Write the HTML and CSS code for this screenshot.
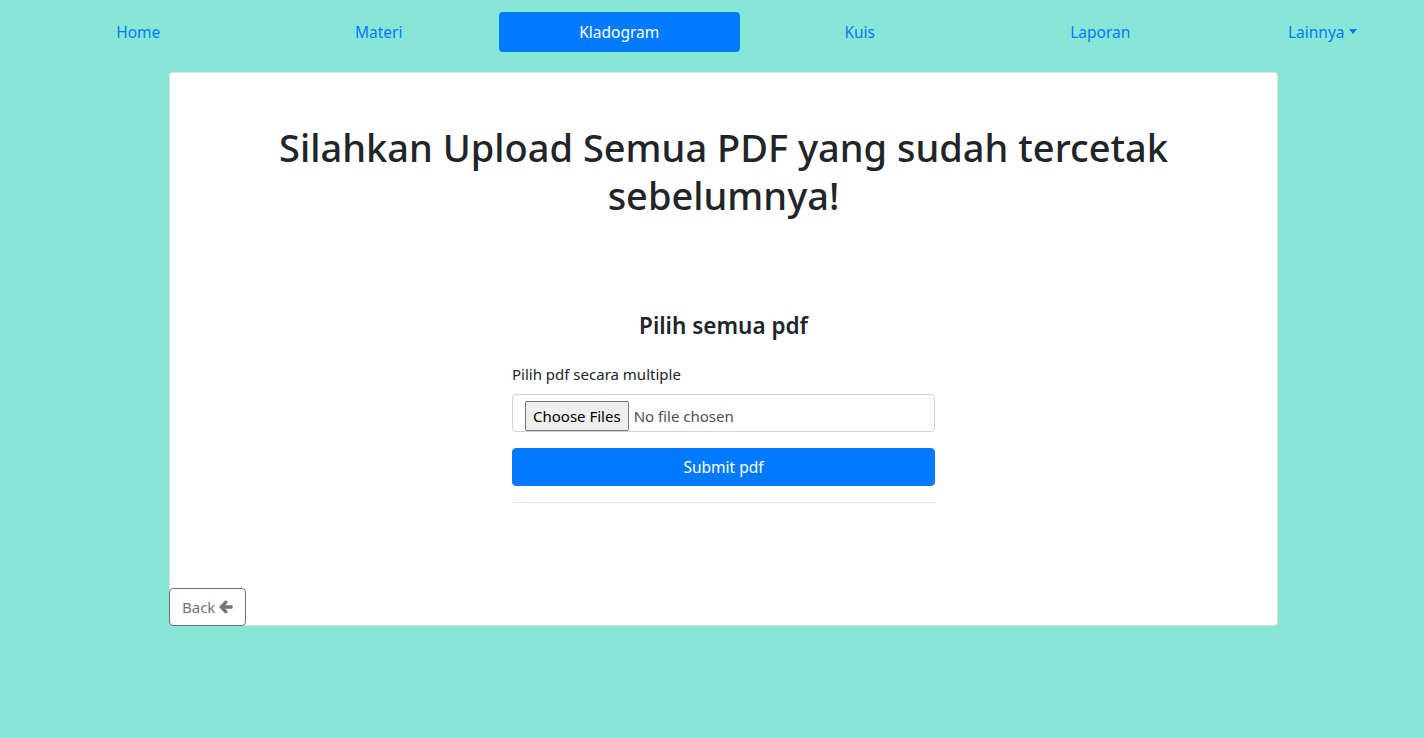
FILE: index.html
```html
<!DOCTYPE html>
<html lang="id">
<head>
<meta charset="utf-8">
<title>Upload PDF</title>
<link rel="stylesheet" href="styles.css">
</head>
<body>
<nav class="topnav">
  <a class="nav-link" href="#">Home</a>
  <a class="nav-link" href="#">Materi</a>
  <a class="nav-link active" href="#">Kladogram</a>
  <a class="nav-link" href="#">Kuis</a>
  <a class="nav-link" href="#">Laporan</a>
  <a class="nav-link" href="#">Lainnya<span class="caret"></span></a>
</nav>
<main class="card">
  <div class="card-body">
    <h1 class="title">Silahkan Upload Semua PDF yang sudah tercetak<br>sebelumnya!</h1>
    <div class="form-col">
      <h4 class="subtitle">Pilih semua pdf</h4>
      <div class="form-group">
        <label class="label">Pilih pdf secara multiple</label>
        <div class="file-input">
          <span class="file-btn">Choose Files</span>
          <span class="file-name">No file chosen</span>
        </div>
      </div>
      <button class="btn-submit" type="button">Submit pdf</button>
      <hr class="divider">
    </div>
  </div>
  <div class="card-footer">
    <a class="btn-back" href="#">Back
      <svg class="arrow" viewBox="0 0 448 512" width="14" height="14"><path fill="currentColor" stroke="currentColor" stroke-width="40" stroke-linejoin="round" d="M257.5 445.1l-22.2 22.2c-9.4 9.4-24.6 9.4-33.9 0L7 273c-9.4-9.4-9.4-24.6 0-33.9L201.4 44.7c9.4-9.4 24.6-9.4 33.9 0l22.2 22.2c9.5 9.5 9.3 25-.4 34.3L136.6 216H424c13.3 0 24 10.7 24 24v32c0 13.3-10.7 24-24 24H136.6l120.5 114.8c9.8 9.3 10 24.8.4 34.3z"/></svg>
    </a>
  </div>
</main>
</body>
</html>
```
FILE: styles.css
```css
* { box-sizing: border-box; }
html, body { margin: 0; padding: 0; }
body {
  background: #87e6d5;
  font-family: "Noto Sans", "Open Sans", sans-serif;
  font-size: 16px;
  color: #212529;
  height: 738px;
}
.topnav {
  display: grid;
  grid-template-columns: repeat(5, 240.5px) 1fr;
  padding: 12px 0 0 18px;
}
.nav-link {
  display: flex;
  align-items: center;
  justify-content: center;
  height: 40px;
  color: #007bff;
  text-decoration: none;
  border-radius: 4px;
  font-size: 15.5px;
}
.nav-link.active {
  background: #007bff;
  color: #fff;
}
.caret {
  display: inline-block;
  margin-left: 4px;
  border-top: 5px solid currentColor;
  border-left: 4px solid transparent;
  border-right: 4px solid transparent;
  vertical-align: middle;
  position: relative;
  top: -1px;
}
.card {
  display: flex;
  flex-direction: column;
  width: 1109px;
  height: 554px;
  margin: 20px 0 0 169px;
  background: #fff;
  border: 1px solid rgba(0,0,0,.125);
  border-radius: 4px;
}
.card-body {
  flex: 1;
  padding: 50px 20px 0;
}
.title {
  margin: 0;
  font-size: 38px;
  font-weight: 500;
  line-height: 48px;
  text-align: center;
}
.form-col {
  width: 423px;
  margin: 92px auto 0;
}
.subtitle {
  margin: 0 0 22px;
  font-size: 22.5px;
  font-weight: 600;
  line-height: 29px;
  text-align: center;
}
.form-group { margin-bottom: 16px; }
.label {
  display: block;
  margin-bottom: 8px;
  font-size: 15px;
  line-height: 24px;
}
.file-input {
  display: flex;
  align-items: flex-start;
  height: 38px;
  padding: 6px 12px;
  border: 1px solid #ced4da;
  border-radius: 4px;
  color: #495057;
}
.file-btn {
  display: inline-flex;
  align-items: center;
  height: 30px;
  padding: 0 7px;
  background: #efefef;
  border: 1px solid #767676;
  border-radius: 2px;
  color: #000;
  font-size: 15px;
}
.file-name {
  margin-left: 5px;
  line-height: 30px;
  font-size: 15px;
}
.btn-submit {
  display: block;
  width: 100%;
  height: 38px;
  background: #007bff;
  color: #fff;
  border: 1px solid #007bff;
  border-radius: 4px;
  font-family: inherit;
  font-size: 15.5px;
}
.divider {
  margin: 16px 0 0;
  border: 0;
  border-top: 1px solid rgba(0,0,0,.1);
}
.card-footer {
  display: flex;
  margin: 0 0 -1px -1px;
}
.btn-back {
  display: inline-flex;
  align-items: center;
  gap: 4px;
  height: 38px;
  padding: 0 12px;
  border: 1px solid #6c757d;
  border-radius: 4px;
  color: #6c757d;
  text-decoration: none;
  font-size: 15px;
}
.arrow { display: block; overflow: visible; }
```
